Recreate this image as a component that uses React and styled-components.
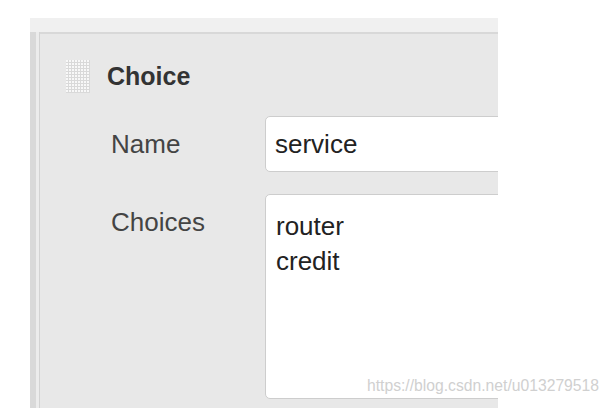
import React from "react";
import styled, { createGlobalStyle } from "styled-components";

const Global = createGlobalStyle`
  html, body { margin: 0; padding: 0; background: #ffffff; }
  body { font-family: "Liberation Sans", Arial, sans-serif; overflow: hidden; }
`;

const Page = styled.div`
  position: relative;
  width: 610px;
  height: 408px;
  padding: 18px 0 0 30px;
  box-sizing: border-box;
  overflow: hidden;
`;

const Panel = styled.div`
  width: 468px;
  height: 400px;
  display: flex;
  flex-direction: column;
  overflow: hidden;
`;

const TopStrip = styled.div`
  height: 14px;
  background: #f0f0f0;
  flex: none;
`;

const Main = styled.div`
  flex: 1;
  display: flex;
`;

const Rail = styled.div`
  width: 6px;
  background: #d9d9d9;
  flex: none;
`;

const Gutter = styled.div`
  width: 3px;
  background: #ececec;
  border-right: 1px solid #d3d3d3;
  flex: none;
`;

const Content = styled.div`
  flex: 1;
  min-width: 0;
  background: #e8e8e8;
  border-top: 2px solid #d8d8d8;
  display: flex;
  flex-direction: column;
`;

const Header = styled.div`
  display: flex;
  align-items: center;
  gap: 17px;
  margin-top: 25px;
  padding-left: 26px;
  height: 34px;
`;

const Title = styled.div`
  font-size: 25px;
  font-weight: bold;
  color: #333;
`;

const Row = styled.div`
  display: flex;
  align-items: ${(p) => (p.$top ? "flex-start" : "center")};
  margin-top: ${(p) => p.$gap}px;
`;

const Label = styled.div`
  width: 154px;
  padding-left: 71px;
  flex: none;
  font-size: 26px;
  line-height: 30px;
  color: #444;
  margin-top: ${(p) => p.$offset || 0}px;
`;

const TextInput = styled.input`
  flex: none;
  width: 270px;
  height: 56px;
  box-sizing: border-box;
  border: 1px solid #cdcdcd;
  border-radius: 5px;
  background: #fff;
  padding: 0 0 0 9px;
  margin: 0;
  font-family: "Liberation Sans", Arial, sans-serif;
  font-size: 26px;
  color: #222;
  outline: none;
`;

const TextArea = styled.textarea`
  flex: none;
  width: 270px;
  height: 205px;
  box-sizing: border-box;
  border: 1px solid #cdcdcd;
  border-radius: 5px;
  background: #fff;
  padding: 14px 0 0 10px;
  margin: 0;
  font-family: "Liberation Sans", Arial, sans-serif;
  font-size: 26px;
  line-height: 35px;
  color: #222;
  resize: none;
  outline: none;
  overflow: hidden;
`;

const Watermark = styled.div`
  position: absolute;
  left: 367px;
  top: 377px;
  font-family: "Liberation Sans", Arial, sans-serif;
  font-size: 15.7px;
  color: #d0d0d0;
  text-shadow: 0 0 1px rgba(255, 255, 255, 0.8);
  white-space: nowrap;
`;

function Grip() {
  const dots = [];
  for (let r = 0; r < 11; r++) {
    for (let c = 0; c < 8; c++) {
      dots.push(
        <rect key={`${r}-${c}`} x={c * 3} y={r * 3} width="2" height="2" fill="#f8f8f8" />
      );
    }
  }
  return (
    <svg width="24" height="33" viewBox="0 0 24 33">
      <rect x="0" y="0" width="24" height="33" fill="#d9d9d9" />
      {dots}
    </svg>
  );
}

export default function App() {
  return (
    <>
      <Global />
      <Page>
        <Panel>
          <TopStrip />
          <Main>
            <Rail />
            <Gutter />
            <Content>
              <Header>
                <Grip />
                <Title>Choice</Title>
              </Header>
              <Row $gap={23}>
                <Label>Name</Label>
                <TextInput defaultValue="service" readOnly />
              </Row>
              <Row $gap={22} $top>
                <Label $offset={13}>Choices</Label>
                <TextArea defaultValue={"router\ncredit"} readOnly />
              </Row>
            </Content>
          </Main>
        </Panel>
        <Watermark>https://blog.csdn.net/u013279518</Watermark>
      </Page>
    </>
  );
}
